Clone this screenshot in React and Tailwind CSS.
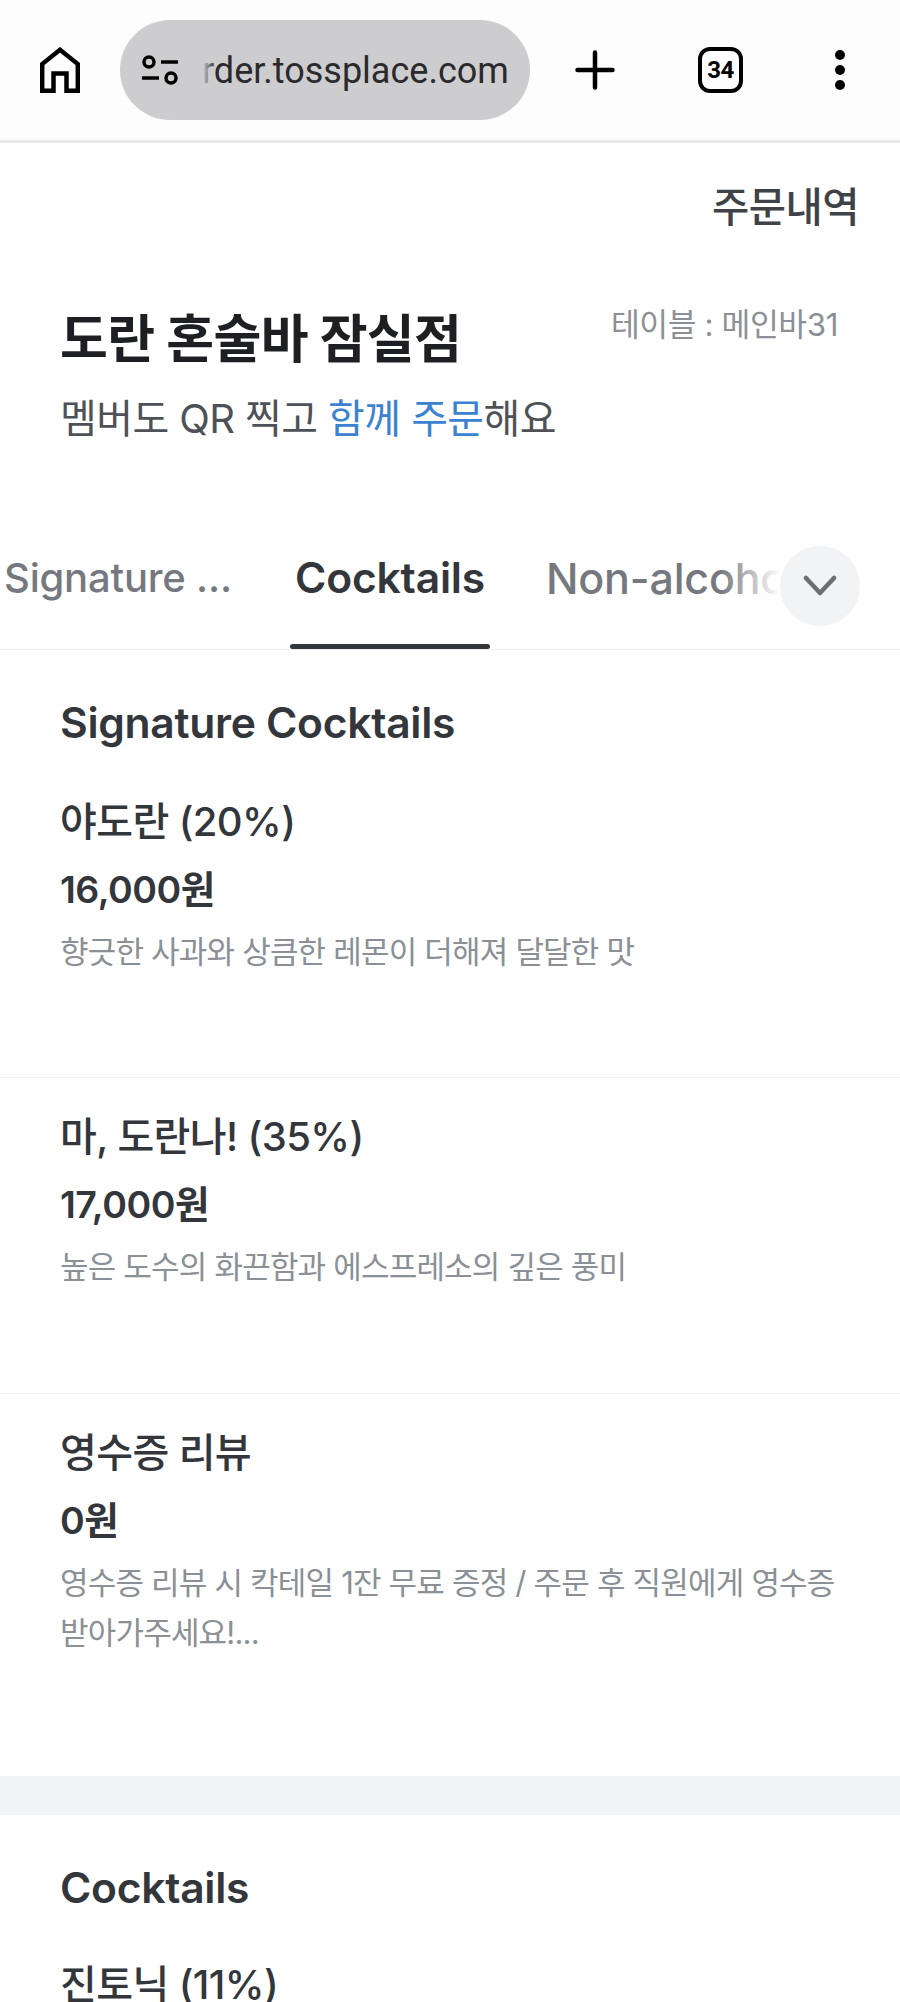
const FONT = 'font-["Inter","Noto_Sans_CJK_KR",sans-serif]';

function Item({ name, price, desc, last, h, nameTop }) {
  return (
    <div className={`px-[60px] ${last ? "" : "border-b border-[#f2f3f5]"}`} style={{ height: h }}>
      <div className="text-[40px] leading-[50px] font-medium text-[#33363b] tracking-[-0.6px]" style={{ paddingTop: nameTop }}>{name}</div>
      <div className="mt-[18px] text-[37.5px] leading-[50px] font-semibold text-[#33363b] tracking-[-0.5px]">{price}</div>
      <div className="mt-[12px] text-[31px] leading-[50px] text-[#8b8f96] tracking-[-0.8px]">{desc}</div>
    </div>
  );
}

export default function App() {
  return (
    <div className={`h-[2002px] w-[900px] overflow-hidden bg-white ${FONT}`}>
      <div className="flex h-[143px] items-center border-b-[3px] border-[#e8e9eb] bg-[#fdfdfe]">
        <svg className="ml-[40px] h-[46px] w-[40px]" viewBox="0 0 40 46" fill="none" stroke="#000" strokeWidth="4.5">
          <path d="M2.2 43.7V17L20 2.8L37.8 17V43.7H26.5V26.5H13.5V43.7Z" strokeLinejoin="miter" />
        </svg>
        <div className="relative ml-[40px] flex h-[100px] w-[410px] items-center rounded-[50px] bg-[#cdcdcf]">
          <svg className="ml-[22px] h-[30px] w-[36px] shrink-0" viewBox="0 0 36 30" fill="none" stroke="#000" strokeWidth="3.5">
            <circle cx="7" cy="7" r="5" />
            <path d="M19 7H36M0 23H17" />
            <circle cx="29" cy="23" r="5" />
          </svg>
          <div className="relative ml-[24px] pt-[1px] font-['Roboto',sans-serif] text-[36px] leading-[40px] whitespace-nowrap text-[#2a2a2c]">
            rder.tossplace.com
            <div className="absolute inset-y-0 left-0 w-[14px] bg-gradient-to-r from-[#cdcdcf] to-transparent" />
          </div>
        </div>
        <svg className="ml-[45px] h-[40px] w-[40px]" viewBox="0 0 40 40" stroke="#000" strokeWidth="4.5" strokeLinecap="round">
          <path d="M20 2.5V37.5M2.5 20H37.5" />
        </svg>
        <div className="ml-[83px] flex h-[46px] w-[45px] items-center justify-center rounded-[12px] border-[4.5px] border-black font-['Roboto',sans-serif] text-[24px] leading-none font-bold tracking-[-0.5px] text-black">
          34
        </div>
        <div className="ml-[92px] flex flex-col gap-[5px]">
          <span className="h-[10px] w-[10px] rounded-full bg-black" />
          <span className="h-[10px] w-[10px] rounded-full bg-black" />
          <span className="h-[10px] w-[10px] rounded-full bg-black" />
        </div>
      </div>

      <div className="flex h-[130px] items-center justify-end pr-[41px] text-[40.5px] font-medium tracking-[-0.5px] text-[#3f4246]">
        주문내역
      </div>

      <div className="flex items-start justify-between pr-[62px] pl-[60px] pt-[35px]">
        <div className="text-[52px] leading-[64px] font-bold tracking-[-0.6px] text-[#1d1f22]">도란 혼술바 잠실점</div>
        <div className="text-[31.3px] leading-[34px] tracking-[-0.4px] text-[#8b8f96]">테이블 : 메인바31</div>
      </div>
      <div className="mt-[22px] pl-[60px] text-[40px] leading-[50px] tracking-[-0.6px] text-[#4e5258]">
        멤버도 QR 찍고 <span className="text-[#3b83d1]">함께 주문</span>해요
      </div>

      <div className="relative mt-[81px] h-[125px] overflow-hidden border-b border-[#eff0f2]">
        <div className="flex h-full items-start pt-[28px] text-[43px] leading-[50px] font-medium tracking-[-0.2px] whitespace-nowrap text-[#75787e]">
          <span className="ml-[4px] w-[236px] text-[40px]">Signature ...</span>
          <span className="ml-[55px] w-[251px] font-semibold text-[#33363b] text-[42.6px]">Cocktails</span>
          <span>Non-alcoholic</span>
        </div>
        <div className="absolute bottom-0 left-[290px] h-[5px] w-[200px] rounded-full bg-[#33363b]" />
        <div className="absolute top-0 left-[720px] h-full w-[60px] bg-gradient-to-r from-transparent to-white" />
        <div className="absolute top-0 left-[780px] h-full w-[120px] bg-white" />
        <div className="absolute top-[21px] left-[780px] flex h-[80px] w-[80px] items-center justify-center rounded-full bg-[#f2f3f5]">
          <svg className="h-[22px] w-[34px]" viewBox="0 0 34 22" fill="none" stroke="#6b6e74" strokeWidth="4.5" strokeLinecap="round" strokeLinejoin="round">
            <path d="M3 3L17 18L31 3" />
          </svg>
        </div>
      </div>

      <div className="px-[60px] pt-[48px] text-[42.6px] leading-[50px] font-semibold tracking-[-0.3px] text-[#33363b]">Signature Cocktails</div>

      <Item h={330} nameTop={49} name="야도란 (20%)" price="16,000원" desc="향긋한 사과와 상큼한 레몬이 더해져 달달한 맛" />
      <Item h={316} nameTop={34} name="마, 도란나! (35%)" price="17,000원" desc="높은 도수의 화끈함과 에스프레소의 깊은 풍미" />
      <Item
        h={382}
        nameTop={34}
        last
        name="영수증 리뷰"
        price="0원"
        desc="영수증 리뷰 시 칵테일 1잔 무료 증정 / 주문 후 직원에게 영수증 받아가주세요!..."
      />

      <div className="h-[39px] bg-[#f2f3f5]" />
      <div className="px-[60px] pt-[48px] text-[42.6px] leading-[50px] font-semibold tracking-[-0.3px] text-[#33363b]">Cocktails</div>
      <div className="mt-[47px] px-[60px] text-[40px] leading-[50px] font-medium tracking-[-0.6px] text-[#33363b]">진토닉 (11%)</div>
    </div>
  );
}
